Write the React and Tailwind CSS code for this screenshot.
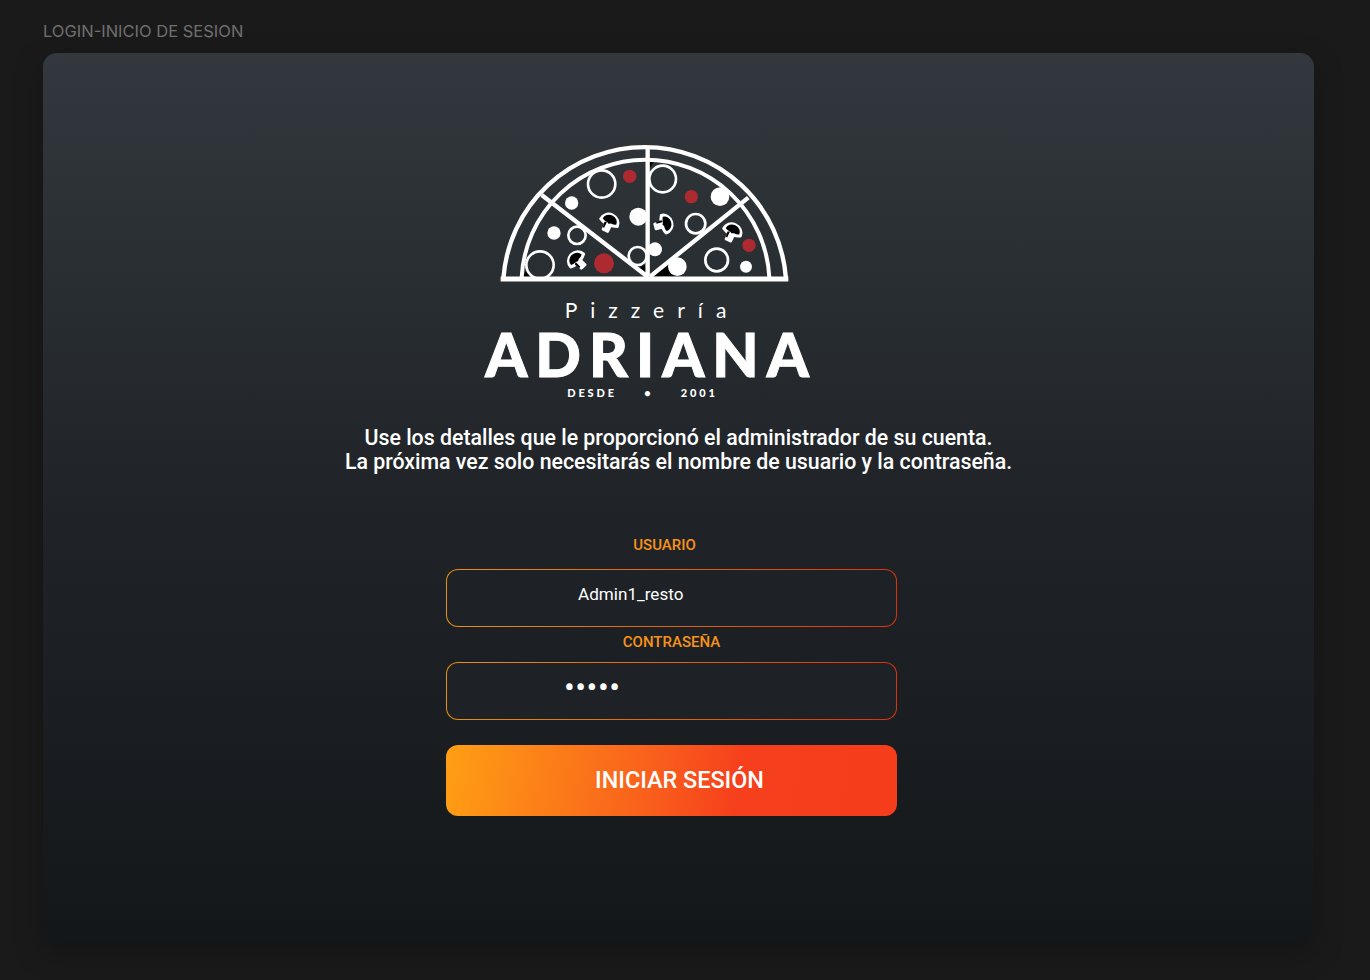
const Mushroom = ({ x, y, rotate }) => (
  <g transform={`translate(${x} ${y}) rotate(${rotate}) scale(1.12)`}>
    <path d="M-25 2 A25 23 0 0 1 25 2 Q12 8 7 7 L7 25 L-7 25 L-7 7 Q-14 8 -25 2 Z" fill="#fff" stroke="#fff" strokeWidth="7" strokeLinejoin="round" />
    <path d="M-20 -1 A20 18 0 0 1 20 -1 Q12 3 6 2 L0 5 L-6 2 Q-12 3 -20 -1 Z" fill="#000" />
    <path d="M-12 5 L-6 2 L-6 20 L-10 20 Z" fill="#000" />
  </g>
)

const PizzaLogo = () => (
  <svg width="340" height="160" viewBox="0 0 1020 480" className="block" fill="none">
    <path d="M498 92 L525 92 L510 112 Z" fill="#000" />
    <path d="M128 440 L140 420 L150 440 Z" fill="#000" />
    <path d="M470 418 L495 405 L495 428 Z" fill="#000" />
    <path d="M522 438 L560 402 L590 438 Z" fill="#000" />

    <g stroke="#fff" strokeWidth="8">
      <circle cx="365" cy="162" r="41" />
      <circle cx="180" cy="405" r="41" />
      <circle cx="291" cy="316" r="26" />
      <circle cx="473" cy="378" r="27" />
      <circle cx="548" cy="147" r="40" />
      <circle cx="647" cy="281" r="29" />
      <circle cx="710" cy="390" r="34" />
    </g>

    <g fill="#fff">
      <circle cx="275" cy="219" r="20" />
      <circle cx="222" cy="309" r="20" />
      <circle cx="475" cy="260" r="27" />
      <circle cx="525" cy="358" r="21" />
      <circle cx="720" cy="200" r="28" />
      <circle cx="592" cy="410" r="28" />
      <circle cx="798" cy="410" r="18" />
    </g>

    <g fill="#ad2a30">
      <circle cx="449" cy="139" r="20" />
      <circle cx="634" cy="200" r="20" />
      <circle cx="807" cy="346" r="20" />
      <circle cx="372" cy="400" r="30" />
    </g>

    <Mushroom x={388} y={276} rotate={25} />
    <Mushroom x={553} y={282} rotate={75} />
    <Mushroom x={757} y={305} rotate={25} />
    <Mushroom x={290} y={390} rotate={-45} />

    <g stroke="#fff">
      <path d="M70 447 A425 425 0 0 1 918 447" strokeWidth="13" />
      <path d="M125 442 A372 372 0 0 1 868 442" strokeWidth="12" />
      <path d="M62 447 L925 447" strokeWidth="15" />
      <path d="M503 55 L503 440" strokeWidth="13" />
      <path d="M185 195 L503 440" strokeWidth="13" />
      <path d="M805 203 L510 440" strokeWidth="13" />
    </g>
  </svg>
)

const Field = ({ label, labelClass, type, value, inputClass }) => (
  <div className="flex flex-col">
    <label className={`text-center text-[15px] leading-4 font-medium text-[#f7931a] ${labelClass}`}>{label}</label>
    <div className="h-[58px] rounded-[12px] bg-[linear-gradient(90deg,#e8930f,#d8340f)] p-px">
      <input
        readOnly
        type={type}
        value={value}
        className={`h-full w-full rounded-[11px] bg-[#1e2226] pb-2 text-white outline-none ${inputClass}`}
      />
    </div>
  </div>
)

const App = () => {
  return (
    <div className="h-[980px] overflow-hidden bg-[#1a1a1a] px-[43px] pt-[21px] font-['Roboto',sans-serif]">
      <h1 className="font-['Inter',sans-serif] text-[16.5px] leading-5 text-[#6f6f6f]">LOGIN-INICIO DE SESION</h1>

      <main className="mt-3 h-[890px] w-[1271px] rounded-[14px] bg-[linear-gradient(180deg,#32383d_0%,#202428_50%,#14171a_100%)] pt-[77px] shadow-[0_10px_30px_rgba(0,0,0,0.25)]">
        <div className="flex flex-col items-center">
          <div className="ml-[-58px] flex flex-col items-center">
            <PizzaLogo />
            <p className="mt-2 ml-[5px] font-['Lato',sans-serif] text-[21px] leading-6 tracking-[0.62em] text-white">Pizzería</p>
            <p className="mt-[3px] ml-[3px] font-['Lato',sans-serif] text-[60px] leading-[58px] font-black tracking-[8px] text-white [-webkit-text-stroke:1px_white]">ADRIANA</p>
            <p className="mt-[2px] ml-[-14px] font-['Lato',sans-serif] text-[11px] leading-4 font-black tracking-[0.26em] whitespace-pre text-white">DESDE     •     2001</p>
          </div>

          <p className="mt-[25px] text-center text-[21.33px] leading-6 font-medium text-white">
            Use los detalles que le proporcionó el administrador de su cuenta.
            <br />
            La próxima vez solo necesitarás el nombre de usuario y la contraseña.
          </p>
        </div>

        <form className="mt-[63px] ml-[403px] flex w-[451px] flex-col">
          <Field label="USUARIO" labelClass="mr-[14px] mb-4" type="text" value="Admin1_resto" inputClass="pl-[131px] text-[17.1px]" />
          <div className="mt-[7px]">
            <Field label="CONTRASEÑA" labelClass="mb-3" type="password" value="admin" inputClass="pl-[117px] text-[32px] tracking-[0.5px]" />
          </div>
          <button
            type="button"
            className="mt-[25px] h-[71px] rounded-[12px] bg-[linear-gradient(100deg,#ff9f14_0%,#f9601c_45%,#f63f1c_65%,#f53d1c_100%)] pl-4 text-[23.4px] font-medium text-white"
          >
            INICIAR SESIÓN
          </button>
        </form>
      </main>
    </div>
  )
}

export default App
